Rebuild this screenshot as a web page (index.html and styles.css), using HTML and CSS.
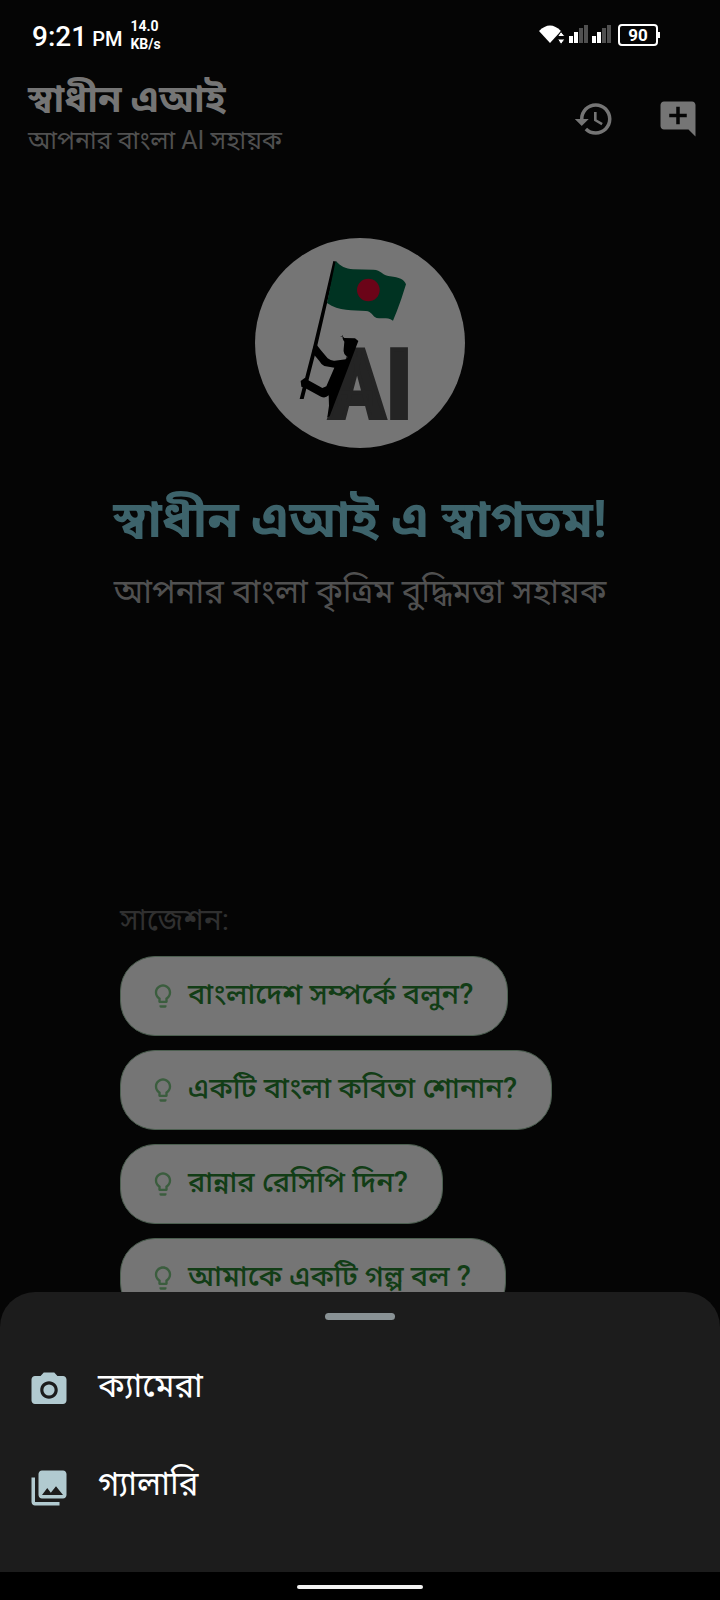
FILE: index.html
```html
<!DOCTYPE html>
<html lang="bn">
<head>
<meta charset="utf-8">
<meta name="viewport" content="width=device-width, initial-scale=1">
<title>স্বাধীন এআই</title>
<link rel="stylesheet" href="styles.css">
</head>
<body>
<svg class="sprite" aria-hidden="true">
  <symbol id="bulb" viewBox="0 0 24 24"><path d="M9 21c0 .55.45 1 1 1h4c.55 0 1-.45 1-1v-1H9v1zm3-19C8.140 2 5 5.140 5 9c0 2.380 1.190 4.470 3 5.740V17c0 .55.45 1 1 1h6c.55 0 1-.45 1-1v-2.260c1.810-1.270 3-3.360 3-5.740 0-3.860-3.140-7-7-7zm2.850 11.100l-.85.6V16h-4v-2.300l-.85-.6C7.800 12.160 7 10.630 7 9c0-2.760 2.240-5 5-5s5 2.240 5 5c0 1.630-.8 3.160-2.150 4.100z"/></symbol>
</svg>
<div class="screen">
  <div class="status">
    <div class="clock">9:21</div>
    <div class="meridiem">PM</div>
    <div class="rate">14.0<br>KB/s</div>
    <div class="indicators">
      <svg class="signals" viewBox="0 0 72 22" aria-hidden="true">
        <path fill="#fff" d="M0 7Q11-4 22 7L11 19z"/>
        <path fill="#fff" stroke="#050505" stroke-width="1" d="M18.500 12.500L22 7.500l4 5zM18.500 15h7.500l-4 5.500z"/>
        <path fill="#fff" d="M30 12h4v7h-4zM35 8h4v11h-4zM53 12h4v7h-4zM58 8h4v11h-4z"/>
        <path fill="#505050" d="M40 4h4v15h-4zM45 1h4v18h-4zM63 4h4v15h-4zM68 1h4v18h-4z"/>
      </svg>
      <div class="battery">90</div>
    </div>
  </div>

  <header class="appbar">
    <div class="brand">
      <h1 class="brand-name">স্বাধীন এআই</h1>
      <p class="brand-tag">আপনার বাংলা AI সহায়ক</p>
    </div>
    <div class="actions">
      <button class="icon-button" type="button" aria-label="ইতিহাস"><svg viewBox="0 0 24 24"><path d="M13 3c-4.970 0-9 4.030-9 9H1l3.890 3.890.07.14L9 12H6c0-3.870 3.130-7 7-7s7 3.130 7 7-3.130 7-7 7c-1.930 0-3.680-.79-4.940-2.060l-1.420 1.420C8.270 19.990 10.510 21 13 21c4.970 0 9-4.030 9-9s-4.030-9-9-9zm-1 5v5l4.280 2.540.72-1.210-3.500-2.080V8H12z"/></svg></button>
      <button class="icon-button" type="button" aria-label="নতুন চ্যাট"><svg viewBox="0 0 24 24"><path d="M22 4c0-1.100-.9-2-2-2H4c-1.100 0-2 .9-2 2v12c0 1.100.9 2 2 2h14l4 4V4zm-5 7h-4v4h-2v-4H7V9h4V5h2v4h4v2z"/></svg></button>
    </div>
  </header>

  <main class="content">
    <svg class="logo" viewBox="45 39 630 630" role="img" aria-label="AI">
      <circle cx="360" cy="354" r="315" fill="#757575"/>
      <path d="M280 108l10 2-28 120-32 140-39 152h-12l40-155 31-130z" fill="#000"/>
      <path d="M287 108C303 124 315 131 340 133L400 134C424 135 426 151 450 154C478 158 492 163 498 178C485 220 475 250 459 287C442 276 428 282 410 279C398 275 395 259 378 258C338 254 297 260 261 234z" fill="#003322"/>
      <circle cx="385" cy="195" r="34" fill="#6b0418"/>
      <text class="logo-text" x="265" y="578">AI</text>
      <path d="M300 336q7-4 13 3l32 1 10 8-86 226-7 3 5-35-1-31q-10 10-23 4l-48-26-11-4-2-17 12-9 11 7 42 23 12-5 24-56-30-5q-10-5-15-15l-10-12-11-13 3-18 11-4 13 16 19 23q10 8 21 7l34-4 6-7q-16-9-13-24l2-22q-8-9-4-19z" fill="#000"/>
    </svg>
    <h2 class="welcome">স্বাধীন এআই এ স্বাগতম!</h2>
    <p class="lead">আপনার বাংলা কৃত্রিম বুদ্ধিমত্তা সহায়ক</p>
    <section class="suggestions">
      <h3 class="suggestions-title">সাজেশন:</h3>
      <button class="chip" type="button"><svg><use href="#bulb"/></svg>বাংলাদেশ সম্পর্কে বলুন?</button>
      <button class="chip" type="button"><svg><use href="#bulb"/></svg>একটি বাংলা কবিতা শোনান?</button>
      <button class="chip" type="button"><svg><use href="#bulb"/></svg>রান্নার রেসিপি দিন?</button>
      <button class="chip" type="button"><svg><use href="#bulb"/></svg>আমাকে একটি গল্প বল ?</button>
    </section>
  </main>

  <div class="bottom">
    <div class="sheet">
      <div class="handle"></div>
      <button class="option" type="button"><svg viewBox="0 0 24 24"><circle cx="12" cy="12" r="3.200"/><path d="M9 2L7.170 4H4c-1.100 0-2 .9-2 2v12c0 1.100.9 2 2 2h16c1.100 0 2-.9 2-2V6c0-1.100-.9-2-2-2h-3.170L15 2H9zm3 15c-2.760 0-5-2.240-5-5s2.240-5 5-5 5 2.240 5 5-2.240 5-5 5z"/></svg><span class="option-label">ক্যামেরা</span></button>
      <button class="option" type="button"><svg viewBox="0 0 24 24"><path d="M22 16V4c0-1.100-.9-2-2-2H8c-1.100 0-2 .9-2 2v12c0 1.100.9 2 2 2h12c1.100 0 2-.9 2-2zm-11-4l2.030 2.710L16 11l4 5H8l3-4zM2 6v14c0 1.100.9 2 2 2h14v-2H4V6H2z"/></svg><span class="option-label">গ্যালারি</span></button>
    </div>
    <div class="navbar"><div class="pill"></div></div>
  </div>
</div>
</body>
</html>
```
FILE: styles.css
```css
* { box-sizing: border-box; }
body {
  margin: 0;
  background: #050505;
  font-family: Roboto, "Noto Sans Bengali", "Noto Sans", sans-serif;
}
h1, h2, h3, p { margin: 0; }
button { border: 0; margin: 0; padding: 0; background: none; font: inherit; }
.sprite { display: none; }
.screen {
  position: relative;
  height: 100vh;
  overflow: hidden;
}
.status {
  display: flex;
  align-items: center;
  height: 70px;
  padding: 0 62px 0 32px;
  color: #fff;
}
.clock { font-size: 28px; line-height: 36px; padding-top: 3px; font-weight: 500; }
.meridiem { margin-left: 5px; font-size: 20px; line-height: 28px; padding-top: 8px; font-weight: 500; }
.rate {
  margin-left: 8px;
  font-size: 14px;
  line-height: 18px;
  font-weight: 700;
}
.indicators {
  display: flex;
  align-items: center;
  gap: 7px;
  margin-left: auto;
}
.signals { width: 72px; height: 22px; }
.battery {
  position: relative;
  width: 40px;
  height: 22px;
  border: 2px solid #fff;
  border-radius: 4px;
  font-size: 17px;
  line-height: 18px;
  font-weight: 700;
  text-align: center;
}
.battery::after {
  content: "";
  position: absolute;
  right: -4px;
  top: 6px;
  width: 2px;
  height: 6px;
  background: #fff;
}
.appbar {
  display: flex;
  justify-content: space-between;
  align-items: center;
  height: 98px;
  padding: 0 21px 0 28px;
}
.brand-name {
  color: #757575;
  font-size: 38px;
  line-height: 44px;
  font-weight: 700;
}
.brand-tag {
  color: #505050;
  font-size: 25px;
  line-height: 40px;
}
.actions { display: flex; gap: 42px; }
.icon-button { display: flex; }
.icon-button svg { width: 42px; height: 42px; fill: #757575; }
.content {
  display: flex;
  flex-direction: column;
  align-items: center;
  padding-top: 70px;
}
.logo { width: 210px; height: 210px; }
.logo-text {
  font-family: "Liberation Sans Narrow", "Roboto Condensed", Roboto, sans-serif;
  font-size: 290px;
  font-weight: 700;
  fill: #242424;
  stroke: #242424;
  stroke-width: 12px;
}
.welcome {
  margin-top: 36px;
  color: #3d636b;
  font-size: 51px;
  line-height: 72px;
  font-weight: 700;
}
.lead {
  margin-top: 12px;
  color: #505050;
  font-size: 33px;
  line-height: 48px;
}
.suggestions {
  align-self: stretch;
  display: flex;
  flex-direction: column;
  align-items: flex-start;
  gap: 14px;
  margin-top: 282px;
  padding: 0 120px;
}
.suggestions-title {
  color: #303030;
  font-size: 30px;
  line-height: 44px;
  font-weight: 400;
}
.chip {
  display: flex;
  align-items: center;
  gap: 11px;
  height: 80px;
  padding: 0 34px 0 28px;
  border: 1px solid #4c5f50;
  border-radius: 35px;
  background: #757575;
  color: #123d16;
  font-size: 29px;
  font-weight: 500;
  white-space: nowrap;
}
.chip svg { width: 28px; height: 28px; fill: #3b5d3e; }
.bottom {
  position: absolute;
  left: 0;
  right: 0;
  bottom: 0;
}
.sheet {
  display: flex;
  flex-direction: column;
  padding: 21px 0 35px;
  border-radius: 35px 35px 0 0;
  background: #1c1c1c;
}
.handle {
  align-self: center;
  width: 70px;
  height: 7px;
  margin-bottom: 21px;
  border-radius: 4px;
  background: #899295;
}
.option {
  display: flex;
  align-items: center;
  gap: 28px;
  height: 98px;
  padding: 0 28px;
  color: #fff;
  font-size: 33px;
}
.option-label { padding-bottom: 4px; }
.option svg { width: 42px; height: 42px; fill: #b1cad0; }
.navbar {
  display: flex;
  justify-content: center;
  align-items: center;
  height: 28px;
  padding-top: 2px;
  background: #000;
}
.pill { width: 126px; height: 4px; border-radius: 2px; background: #f2f2f2; }
```
